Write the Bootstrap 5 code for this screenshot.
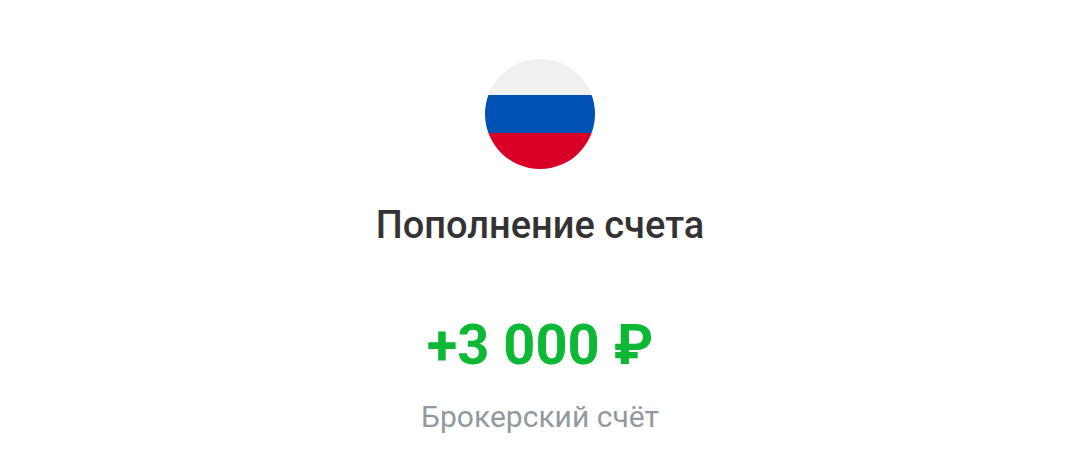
<!DOCTYPE html>
<html lang="ru">
<head>
<meta charset="utf-8">
<meta name="viewport" content="width=device-width, initial-scale=1">
<title>Пополнение счета</title>
<link href="https://cdn.jsdelivr.net/npm/bootstrap@5.3.0/dist/css/bootstrap.min.css" rel="stylesheet">
<style>
body { font-family: Roboto, "Liberation Sans", sans-serif; background: #fff; }
.operation { padding-top: 59px; }
.flag { width: 110px; height: 110px; }
.op-title { font-size: 38px; line-height: 48px; font-weight: 500; color: #333333; margin-top: 32px; }
.op-amount { font-size: 56px; line-height: 64px; font-weight: 700; color: #0db834; margin-top: 64px; }
.op-account { font-size: 30px; line-height: 40px; color: #9299a0; margin-top: 20px; }
</style>
</head>
<body>
<main class="operation container-fluid d-flex flex-column align-items-center text-center">
  <svg class="flag" viewBox="0 0 110 110" role="img" aria-label="Россия">
    <defs><clipPath id="round"><circle cx="55" cy="55" r="55"/></clipPath></defs>
    <g clip-path="url(#round)">
      <rect width="110" height="110" fill="#f0f0f0"/>
      <rect y="36" width="110" height="38" fill="#0052b4"/>
      <rect y="74" width="110" height="36" fill="#d80027"/>
    </g>
  </svg>
  <h1 class="op-title mb-0">Пополнение счета</h1>
  <p class="op-amount mb-0">+3 000 ₽</p>
  <p class="op-account mb-0">Брокерский счёт</p>
</main>
<script src="https://cdn.jsdelivr.net/npm/bootstrap@5.3.0/dist/js/bootstrap.bundle.min.js"></script>
</body>
</html>
